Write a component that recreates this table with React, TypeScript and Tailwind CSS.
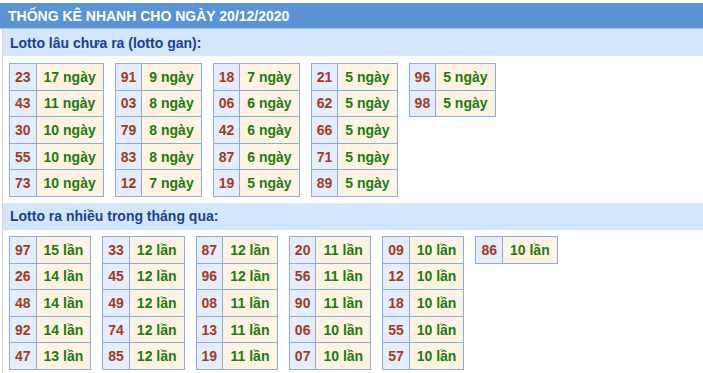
type Pair = [string, number];

const ganGroups: Pair[][] = [
  [["23", 17], ["43", 11], ["30", 10], ["55", 10], ["73", 10]],
  [["91", 9], ["03", 8], ["79", 8], ["83", 8], ["12", 7]],
  [["18", 7], ["06", 6], ["42", 6], ["87", 6], ["19", 5]],
  [["21", 5], ["62", 5], ["66", 5], ["71", 5], ["89", 5]],
  [["96", 5], ["98", 5]],
];

const nhieuGroups: Pair[][] = [
  [["97", 15], ["26", 14], ["48", 14], ["92", 14], ["47", 13]],
  [["33", 12], ["45", 12], ["49", 12], ["74", 12], ["85", 12]],
  [["87", 12], ["96", 12], ["08", 11], ["13", 11], ["19", 11]],
  [["20", 11], ["56", 11], ["90", 11], ["06", 10], ["07", 10]],
  [["09", 10], ["12", 10], ["18", 10], ["55", 10], ["57", 10]],
  [["86", 10]],
];

function StatTable({ rows, unit }: { rows: Pair[]; unit: string }) {
  return (
    <table className="border-collapse">
      <tbody>
        {rows.map(([num, count]) => (
          <tr key={num}>
            <td className="h-[26.6px] border border-[#8eabdd] bg-[#e3edfb] px-[5px] py-0 text-center text-[#a33b1d]">
              {num}
            </td>
            <td className="h-[26.6px] border border-[#8eabdd] bg-[#fdf3e2] px-[7px] py-0 text-center text-[#1d7b0d]">
              {count} {unit}
            </td>
          </tr>
        ))}
      </tbody>
    </table>
  );
}

function Section({ title, groups, unit, first }: { title: string; groups: Pair[][]; unit: string; first?: boolean }) {
  return (
    <div>
      <div className="flex h-[27px] items-center bg-[#d4e6fb] pl-[7px] text-[#1c3e93]">{title}</div>
      <div className={`flex items-start gap-[11px] pb-[6px] pl-[6px] ${first ? "pt-[7px]" : "pt-[6px]"}`}>
        {groups.map((g, i) => (
          <StatTable key={i} rows={g} unit={unit} />
        ))}
      </div>
    </div>
  );
}

export default function App() {
  return (
    <div
      className="w-[703px] h-[373px] overflow-hidden bg-white pt-[3px] text-[14px] font-bold leading-none"
      style={{ fontFamily: '"Liberation Sans", Arial, sans-serif' }}
    >
      <div className="flex h-[26px] items-center border-b border-[#a6c6ee] bg-[#5b94d6] pl-[8px] text-white">
        THỐNG KÊ NHANH CHO NGÀY 20/12/2020
      </div>
      <div className="ml-[2px] border-l border-[#d6d6d6]">
        <Section title="Lotto lâu chưa ra (lotto gan):" groups={ganGroups} unit="ngày" first />
        <Section title="Lotto ra nhiều trong tháng qua:" groups={nhieuGroups} unit="lần" />
      </div>
    </div>
  );
}
